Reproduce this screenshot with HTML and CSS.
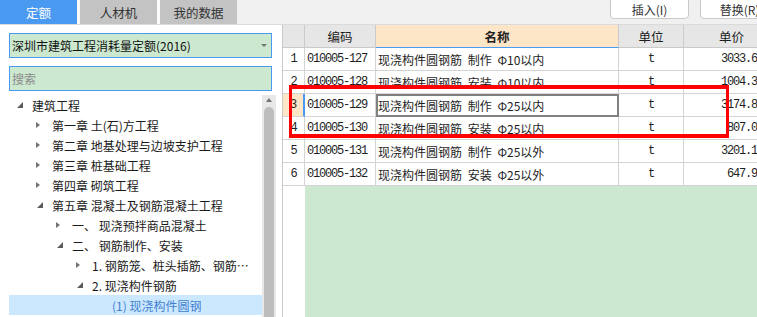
FILE: index.html
```html
<!DOCTYPE html>
<html lang="zh-CN">
<head>
  <meta charset="UTF-8">
  <meta name="viewport" content="width=device-width, initial-scale=1.0">
  <title>定额库</title>
  <link rel="stylesheet" href="styles.css">
</head>
<body>
  <div class="app">
    <div class="topbar">
      <div class="tabs">
        <div class="tab active">定额</div>
        <div class="tab">人材机</div>
        <div class="tab">我的数据</div>
      </div>
      <div class="actions">
        <button class="btn">插入(I)</button>
        <button class="btn">替换(R)</button>
      </div>
    </div>

    <div class="main">
      <div class="left">
        <div class="select">深圳市建筑工程消耗量定额(2016)<span class="caret"></span></div>
        <input class="search" type="text" placeholder="搜索">
        <div class="tree-wrap">
          <ul class="tree">
            <li class="node lv1"><span class="tw"><i class="tri open"></i></span><span class="label">建筑工程</span></li>
            <li class="node lv2"><span class="tw"><i class="tri"></i></span><span class="label">第一章 土(石)方工程</span></li>
            <li class="node lv2"><span class="tw"><i class="tri"></i></span><span class="label">第二章 地基处理与边坡支护工程</span></li>
            <li class="node lv2"><span class="tw"><i class="tri"></i></span><span class="label">第三章 桩基础工程</span></li>
            <li class="node lv2"><span class="tw"><i class="tri"></i></span><span class="label">第四章 砌筑工程</span></li>
            <li class="node lv2"><span class="tw"><i class="tri open"></i></span><span class="label">第五章 混凝土及钢筋混凝土工程</span></li>
            <li class="node lv3"><span class="tw"><i class="tri"></i></span><span class="label">一、 现浇预拌商品混凝土</span></li>
            <li class="node lv3"><span class="tw"><i class="tri open"></i></span><span class="label">二、 钢筋制作、安装</span></li>
            <li class="node lv4"><span class="tw"><i class="tri"></i></span><span class="label">1. 钢筋笼、桩头插筋、钢筋网片制作安装</span></li>
            <li class="node lv4"><span class="tw"><i class="tri open"></i></span><span class="label">2. 现浇构件钢筋</span></li>
            <li class="node lv5 sel"><span class="tw"></span><span class="label">(1) 现浇构件圆钢</span></li>
          </ul>
          <div class="scrollbar">
            <span class="sb-arrow"></span>
            <div class="thumb"></div>
          </div>
        </div>
      </div>

      <div class="right">
        <div class="grid">
          <div class="c h"></div>
          <div class="c h">编码</div>
          <div class="c h cur">名称</div>
          <div class="c h">单位</div>
          <div class="c h">单价</div>

          <div class="c num">1</div>
          <div class="c code">010005-127</div>
          <div class="c name">现浇构件圆钢筋 制作 Φ10以内</div>
          <div class="c unit">t</div>
          <div class="c price">3033.68</div>

          <div class="c num">2</div>
          <div class="c code">010005-128</div>
          <div class="c name">现浇构件圆钢筋 安装 Φ10以内</div>
          <div class="c unit">t</div>
          <div class="c price">1004.32</div>

          <div class="c num cur">3</div>
          <div class="c code">010005-129</div>
          <div class="c name focus">现浇构件圆钢筋 制作 Φ25以内</div>
          <div class="c unit">t</div>
          <div class="c price">3174.85</div>

          <div class="c num">4</div>
          <div class="c code">010005-130</div>
          <div class="c name">现浇构件圆钢筋 安装 Φ25以内</div>
          <div class="c unit">t</div>
          <div class="c price">807.04</div>

          <div class="c num">5</div>
          <div class="c code">010005-131</div>
          <div class="c name">现浇构件圆钢筋 制作 Φ25以外</div>
          <div class="c unit">t</div>
          <div class="c price">3201.18</div>

          <div class="c num">6</div>
          <div class="c code">010005-132</div>
          <div class="c name">现浇构件圆钢筋 安装 Φ25以外</div>
          <div class="c unit">t</div>
          <div class="c price">647.93</div>
        </div>
        <div class="blank">
          <div class="blank-num"></div>
          <div class="blank-fill"></div>
        </div>
      </div>
    </div>

    <div class="mark"></div>
  </div>
</body>
</html>
```

FILE: styles.css
```css
body {
  margin: 0;
  overflow: hidden;
  background: #fff;
  color: #1a1a1a;
  font-family: "Noto Sans CJK SC", "Noto Sans", sans-serif;
  font-size: 12px;
}
.app {
  position: relative;
  width: 780px;
  height: 317px;
  display: flex;
  flex-direction: column;
}

/* top bar */
.topbar {
  flex: none;
  height: 24px;
  display: flex;
  background: #f0f0f0;
}
.tabs {
  display: flex;
  gap: 3px;
  background: #fafafa;
}
.tab {
  width: 77px;
  height: 24px;
  display: flex;
  align-items: center;
  justify-content: center;
  background: #c3c3c3;
  color: #333;
  font-size: 12.5px;
}
.tab.active {
  background: #4a9af2;
  color: #fff;
}
.actions {
  margin-left: auto;
  margin-right: 1px;
  display: flex;
  gap: 11px;
}
.btn {
  width: 79px;
  height: 23px;
  margin-top: -4px;
  padding: 3px 0 0;
  border: 1px solid #c9c9c9;
  border-radius: 4px;
  background: #fff;
  color: #333;
  font-family: inherit;
  font-size: 12px;
  line-height: 15px;
}

/* body */
.main {
  flex: 1;
  min-height: 0;
  display: flex;
  border-top: 1px solid #dadada;
}
.left {
  flex: none;
  width: 276px;
  display: flex;
  flex-direction: column;
  padding-top: 8px;
  box-sizing: border-box;
}
.select,
.search {
  height: 25px;
  margin: 0 4px 0 9px;
  box-sizing: border-box;
  border: 1px solid #4a9af2;
  background: #cce8cf;
  padding: 0 0 0 2px;
}
.select {
  display: flex;
  align-items: center;
  font-size: 12px;
  color: #111;
}
.caret {
  margin-left: auto;
  margin-right: 4px;
  border-left: 3px solid transparent;
  border-right: 3px solid transparent;
  border-top: 3px solid #777;
}
.search {
  margin-top: 8px;
  width: 263px;
  font-family: inherit;
  font-size: 12px;
  outline: none;
}
.search::placeholder {
  color: #8a8a8a;
}

.tree-wrap {
  flex: 1;
  min-height: 0;
  margin-top: 4px;
  display: flex;
  overflow: hidden;
}
.tree {
  flex: 1;
  min-width: 0;
  list-style: none;
  margin: 0;
  padding: 0 0 0 9px;
}
.node {
  height: 20px;
  display: flex;
  align-items: center;
  padding-right: 4px;
  font-size: 12px;
  white-space: nowrap;
}
.node .label {
  overflow: hidden;
  text-overflow: ellipsis;
}
.lv2 { padding-left: 20px; }
.lv3 { padding-left: 40px; }
.lv4 { padding-left: 60px; }
.lv5 { padding-left: 80px; }
.node.sel {
  background: #cce8ff;
  color: #3f7fcf;
}
.tw {
  flex: none;
  width: 23px;
  display: flex;
  align-items: center;
}
.tri {
  margin-left: 7px;
  width: 0;
  height: 0;
  border-top: 3.5px solid transparent;
  border-bottom: 3.5px solid transparent;
  border-left: 4px solid #737373;
}
.tri.open {
  margin-left: 8px;
  border-top: 0;
  border-left: 6px solid transparent;
  border-bottom: 6px solid #5c5c5c;
}

.scrollbar {
  flex: none;
  width: 14px;
  background: #e8e8e8;
  display: flex;
  flex-direction: column;
  align-items: center;
}
.sb-arrow {
  margin-top: 3px;
  border-left: 3.5px solid transparent;
  border-right: 3.5px solid transparent;
  border-bottom: 4px solid #737373;
}
.thumb {
  flex: 1;
  width: 10px;
  margin-top: 5px;
  background: #bdbdbd;
  border-radius: 5px 5px 0 0;
}

/* table */
.right {
  flex: 1;
  display: flex;
  flex-direction: column;
  margin-left: 6px;
  border-left: 1px solid #c8c8c8;
}
.grid {
  display: grid;
  grid-template-columns: 22px 71px 243px 65px 1fr;
}
.c {
  height: 23px;
  box-sizing: border-box;
  border-right: 1px solid #d4d4d4;
  border-bottom: 1px solid #d4d4d4;
  display: flex;
  align-items: center;
  white-space: nowrap;
  overflow: hidden;
  color: #1e1e1e;
}
.h {
  justify-content: center;
  background: #e6e6e6;
  border-color: #cacaca;
  font-size: 12.5px;
}
.h.cur {
  background: #fde5c8;
  border-bottom-color: #4a9af2;
  font-weight: bold;
}
.num,
.code,
.unit,
.price {
  font-family: "Liberation Mono", monospace;
  font-size: 12px;
  letter-spacing: -1.2px;
}
.num {
  justify-content: center;
}
.num.cur {
  background: #fde5c8;
  border-right: 2px solid #4a9af2;
}
.code {
  padding-left: 2px;
}
.name {
  padding-left: 2px;
  font-size: 12px;
  word-spacing: 3px;
}
.name.focus {
  outline: 2px solid #808080;
  outline-offset: -2px;
}
.unit {
  justify-content: center;
}
.price {
  justify-content: flex-end;
  padding-right: 16px;
}
.blank {
  flex: 1;
  display: flex;
}
.blank-num {
  width: 22px;
}
.blank-fill {
  flex: 1;
  background: #cde8d0;
}

/* annotation box */
.mark {
  position: absolute;
  left: 289px;
  top: 85px;
  width: 440px;
  height: 53px;
  box-sizing: border-box;
  border: solid #ff0000;
  border-width: 4px 3px;
}
```
